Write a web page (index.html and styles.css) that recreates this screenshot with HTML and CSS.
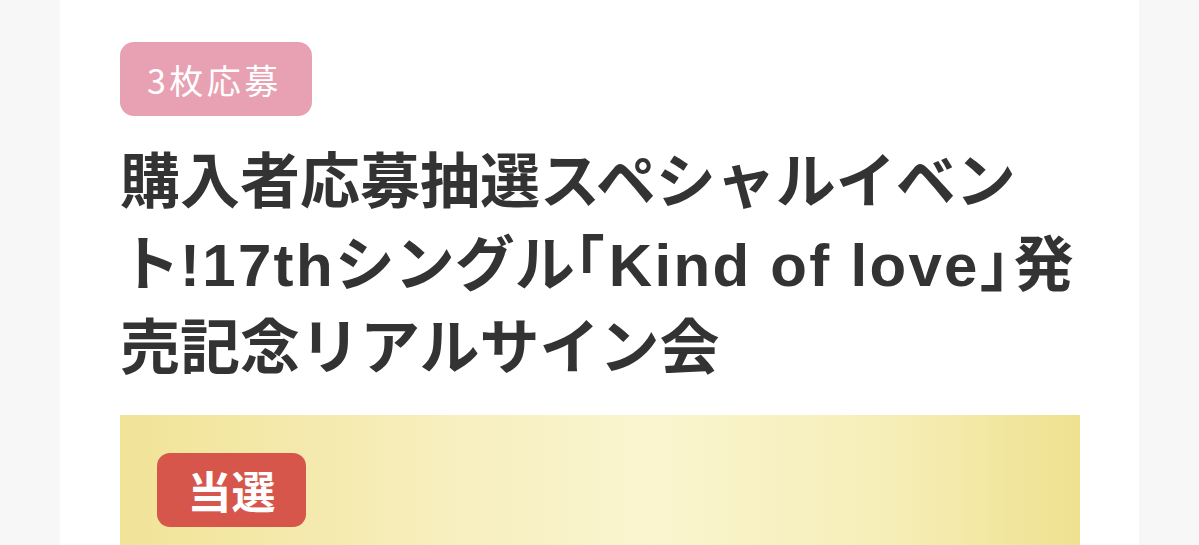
FILE: index.html
```html
<!DOCTYPE html>
<html lang="ja">
<head>
<meta charset="utf-8">
<link rel="stylesheet" href="styles.css">
</head>
<body>
<div class="page">
  <div class="card">
    <div class="tag">3枚応募</div>
    <h1 class="title">購入者応募抽選スペシャルイベント<span class="lat">!17th</span>シングル<span class="br">「</span><span class="lat">Kind of love</span><span class="br">」</span>発売記念リアルサイン会</h1>
    <div class="result">
      <div class="badge">当選</div>
    </div>
  </div>
</div>
</body>
</html>
```

FILE: styles.css
```css
html, body {
  margin: 0;
  padding: 0;
}
body {
  background: #f7f7f7;
  font-family: "Liberation Sans", "Noto Sans CJK JP", sans-serif;
  color: #333333;
  height: 545px;
  overflow: hidden;
}
.page {
  display: flex;
  justify-content: flex-start;
  padding-left: 60px;
}
.card {
  width: 1079px;
  box-sizing: border-box;
  background: #ffffff;
  padding: 42px 60px 0 60px;
  min-height: 545px;
  display: flex;
  flex-direction: column;
  align-items: flex-start;
}
.tag {
  height: 74px;
  box-sizing: border-box;
  padding: 0 30px 0 27px;
  display: flex;
  align-items: center;
  background: #e8a1b3;
  color: #ffffff;
  border-radius: 14px;
  font-family: "Noto Sans CJK JP", sans-serif;
  font-weight: 400;
  font-size: 34px;
  letter-spacing: 3.5px;
}
.title {
  margin: 25px 0 0 0;
  font-size: 60px;
  line-height: 83px;
  font-weight: 700;
  color: #333333;
  width: 960px;
  font-family: "Liberation Sans", "Noto Sans CJK JP", sans-serif;
}
.lat {
  letter-spacing: 2.3px;
}
.br {
  font-feature-settings: "halt";
  letter-spacing: 4px;
}
.result {
  margin-top: 25px;
  width: 960px;
  height: 200px;
  box-sizing: border-box;
  padding: 38px 37px;
  background: linear-gradient(90deg, #f1e397 0%, #f7efbf 35%, #faf5cf 55%, #f6eeb8 80%, #efe18f 100%);
}
.badge {
  display: inline-flex;
  align-items: center;
  justify-content: center;
  width: 149px;
  height: 74px;
  box-sizing: border-box;
  background: #d6564b;
  color: #ffffff;
  border-radius: 13px;
  font-family: "Noto Sans CJK JP", sans-serif;
  font-weight: 700;
  font-size: 44px;
}
```
